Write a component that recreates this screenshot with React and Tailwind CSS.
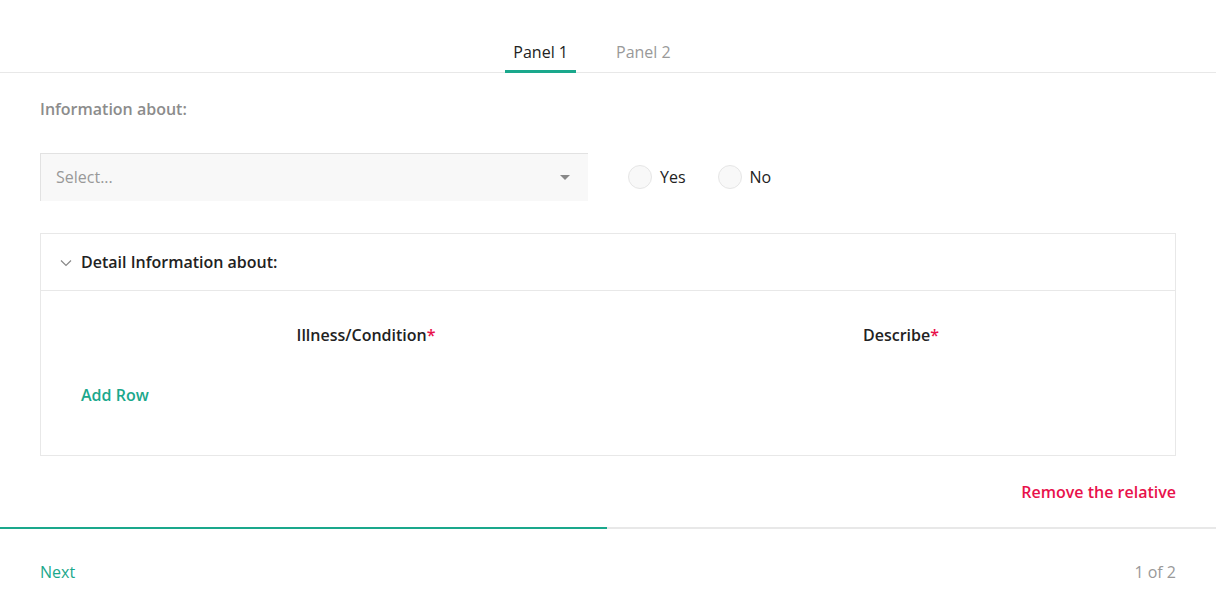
import React from "react";

export default function App() {
  return (
    <div className="w-[1216px] h-[616px] bg-white overflow-hidden flex flex-col" style={{ fontFamily: '"Open Sans", sans-serif' }}>
      {/* Tabs */}
      <div className="pt-[40px] border-b border-[#e8e8e8] flex justify-center">
        <div className="flex gap-[22px] ml-[-22px]">
          <div className="px-[8px] pb-[6px] border-b-[3px] border-[#1aa88c] text-[16px] leading-[24px] text-[#222] mb-[-1px]">Panel 1</div>
          <div className="px-[18px] pb-[6px] text-[16px] leading-[24px] text-[#999]">Panel 2</div>
        </div>
      </div>

      <div className="px-[40px]">
        <div className="pt-[26px] text-[16px] leading-[20px] font-semibold text-[#8c8c8c]">Information about:</div>

        <div className="mt-[34px] flex items-center">
          <div className="w-[548px] h-[48px] bg-[#f8f8f8] border-t border-l border-[#e2e2e2] flex items-center justify-between pl-[15px] pr-[18px]">
            <span className="text-[16px] leading-[22px] text-[#999] mt-[-1px]">Select...</span>
            <svg width="10" height="5" viewBox="0 0 10 5"><path d="M0 0 L10 0 L5 5 Z" fill="#888" /></svg>
          </div>
          <label className="ml-[40px] flex items-center">
            <span className="w-[24px] h-[24px] rounded-full border border-[#e6e6e6] bg-[#f8f8f8]" />
            <span className="ml-[8px] text-[16px] text-[#222]">Yes</span>
          </label>
          <label className="ml-[32px] flex items-center">
            <span className="w-[24px] h-[24px] rounded-full border border-[#e6e6e6] bg-[#f8f8f8]" />
            <span className="ml-[8px] text-[16px] text-[#222]">No</span>
          </label>
        </div>

        <div className="mt-[32px] border border-[#e8e8e8] h-[223px]">
          <div className="h-[57px] border-b border-[#e8e8e8] flex items-center pl-[19px]">
            <svg width="12" height="8" viewBox="0 0 12 8" className="mt-[1px]"><path d="M1 1.5 L6 6.5 L11 1.5" fill="none" stroke="#888" strokeWidth="1.2" /></svg>
            <span className="ml-[9px] text-[16px] leading-[22px] font-semibold text-[#222]">Detail Information about:</span>
          </div>
          <div className="px-[24px]">
            <div className="grid grid-cols-[602px_468px_1fr] pt-[33px]">
              <div className="text-center text-[16px] font-semibold text-[#222] leading-[22px]">Illness/Condition<span className="text-[#e8114b]">*</span></div>
              <div className="text-center text-[16px] font-semibold text-[#222] leading-[22px]">Describe<span className="text-[#e8114b]">*</span></div>
              <div />
            </div>
            <div className="mt-[38px] pl-[16px] text-[16px] font-semibold text-[#1aa88c] leading-[22px]">Add Row</div>
          </div>
        </div>

        <div className="mt-[26px] text-right text-[16px] font-semibold text-[#e8114b] leading-[20px]">Remove the relative</div>
      </div>

      <div className="mt-[25px] h-[2px] bg-[#e8e8e8] flex">
        <div className="w-[607px] bg-[#1aa88c]" />
      </div>

      <div className="px-[40px] pt-[32px] flex justify-between items-center">
        <span className="text-[16px] text-[#1aa88c] leading-[22px]">Next</span>
        <span className="text-[16px] text-[#999] leading-[22px]">1 of 2</span>
      </div>
    </div>
  );
}
